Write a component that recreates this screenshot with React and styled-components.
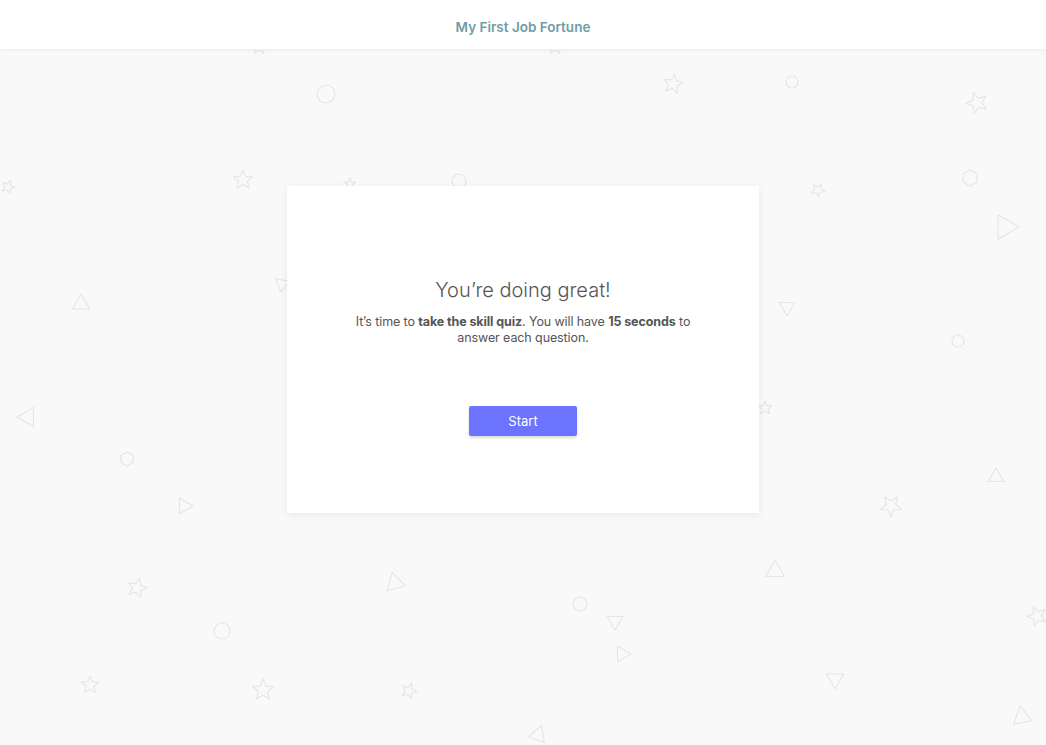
import React from 'react'
import styled, { createGlobalStyle } from 'styled-components'

const GlobalStyle = createGlobalStyle`
	html, body {
		margin: 0;
		padding: 0;
		background: #f9f9f9;
		font-family: 'Inter', 'Roboto', sans-serif;
	}
`

const Page = styled.div`
	position: relative;
	min-height: 100vh;
	overflow: hidden;
	background: #f9f9f9;
`

const Backdrop = styled.svg`
	position: absolute;
	top: 0;
	left: 0;
	pointer-events: none;
`

const Header = styled.header`
	position: relative;
	z-index: 2;
	height: 49px;
	display: flex;
	align-items: center;
	justify-content: center;
	background: #ffffff;
	box-shadow: 0 1px 4px rgba(0, 0, 0, 0.06);
`

const Brand = styled.h1`
	margin: 4px 0 0;
	font-size: 13.5px;
	font-weight: 600;
	color: #6f9ca7;
`

const Main = styled.main`
	position: relative;
	z-index: 1;
	display: flex;
	justify-content: center;
	padding-top: 137px;
`

const Card = styled.section`
	width: 472px;
	height: 327px;
	box-sizing: border-box;
	padding-top: 92px;
	display: flex;
	flex-direction: column;
	align-items: center;
	background: #ffffff;
	box-shadow: 0 2px 8px rgba(0, 0, 0, 0.07);
`

const Heading = styled.h2`
	margin: 0;
	font-size: 20px;
	font-weight: 300;
	color: #555555;
	line-height: 24px;
`

const Text = styled.p`
	margin: 12px 0 0;
	width: 340px;
	text-align: center;
	font-size: 12.5px;
	line-height: 16px;
	color: #555555;
	letter-spacing: -0.1px;

	strong {
		font-weight: 700;
	}
`

const Button = styled.button`
	margin-top: 60px;
	width: 108px;
	height: 30px;
	border: none;
	border-radius: 2px;
	background: #6b73ff;
	color: #ffffff;
	font-family: inherit;
	font-size: 13px;
	box-shadow: 0 2px 3px rgba(0, 0, 0, 0.15);
	cursor: pointer;
`

const shapes = [
	['circle', 326, 94, 9, 0],
	['star', 673, 84, 10, 10],
	['circle', 792, 82, 6, 0],
	['star', 977, 103, 11, -20],
	['star', 243, 180, 10, 0],
	['star', 8, 187, 7, 20],
	['circle', 459, 181, 7, 0],
	['star', 350, 184, 6, 0],
	['hex', 970, 178, 8, 0],
	['star', 818, 190, 7, 30],
	['tri', 1005, 227, 14, 90],
	['tri', 81, 304, 10, 0],
	['tri', 787, 307, 9, 180],
	['circle', 958, 341, 6, 0],
	['tri', 28, 417, 11, -90],
	['star', 765, 408, 7, 0],
	['hex', 127, 459, 7, 0],
	['tri', 184, 506, 9, 90],
	['star', 891, 506, 11, 180],
	['tri', 996, 477, 9, 0],
	['tri', 775, 571, 11, 0],
	['star', 137, 588, 10, 15],
	['tri', 395, 583, 11, 225],
	['circle', 580, 604, 7, 0],
	['tri', 615, 621, 9, 180],
	['tri', 622, 654, 9, 90],
	['circle', 222, 631, 8, 0],
	['star', 90, 685, 9, 0],
	['star', 263, 690, 11, 0],
	['star', 409, 691, 8, 20],
	['tri', 835, 679, 10, 180],
	['tri', 1022, 717, 11, 110],
	['star', 1037, 616, 10, -20],
	['tri', 538, 735, 10, -100],
	['star', 555, 47, 8, 0],
	['star', 259, 47, 8, 0],
	['tri', 282, 284, 8, 70],
]

const starPoints = (r) => {
	const pts = []
	for (let i = 0; i < 10; i++) {
		const rad = i % 2 === 0 ? r : r * 0.45
		const a = (Math.PI / 5) * i - Math.PI / 2
		pts.push(`${(rad * Math.cos(a)).toFixed(2)},${(rad * Math.sin(a)).toFixed(2)}`)
	}
	return pts.join(' ')
}

const polyPoints = (r, n, offset) => {
	const pts = []
	for (let i = 0; i < n; i++) {
		const a = ((Math.PI * 2) / n) * i + offset
		pts.push(`${(r * Math.cos(a)).toFixed(2)},${(r * Math.sin(a)).toFixed(2)}`)
	}
	return pts.join(' ')
}

const Shape = ({ kind, x, y, r, rot }) => {
	const common = { fill: 'none', stroke: '#e6e6e6', strokeWidth: 1.2, strokeLinejoin: 'round' }
	let el
	if (kind === 'circle') el = <circle r={r} {...common} />
	else if (kind === 'star') el = <polygon points={starPoints(r)} {...common} />
	else if (kind === 'hex') el = <polygon points={polyPoints(r, 6, Math.PI / 6)} {...common} />
	else el = <polygon points={polyPoints(r, 3, -Math.PI / 2)} {...common} />
	return <g transform={`translate(${x} ${y}) rotate(${rot})`}>{el}</g>
}

export default function App() {
	return (
		<Page>
			<GlobalStyle />
			<Backdrop width="1046" height="745" viewBox="0 0 1046 745">
				{shapes.map(([kind, x, y, r, rot], i) => (
					<Shape key={i} kind={kind} x={x} y={y} r={r} rot={rot} />
				))}
			</Backdrop>
			<Header>
				<Brand>My First Job Fortune</Brand>
			</Header>
			<Main>
				<Card>
					<Heading>You’re doing great!</Heading>
					<Text>
						It’s time to <strong>take the skill quiz</strong>. You will have{' '}
						<strong>15 seconds</strong> to answer each question.
					</Text>
					<Button>Start</Button>
				</Card>
			</Main>
		</Page>
	)
}
